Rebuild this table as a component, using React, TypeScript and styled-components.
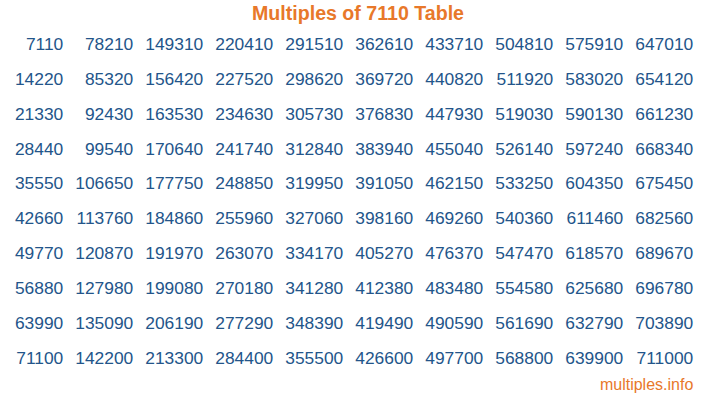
import React from 'react';
import styled, { createGlobalStyle } from 'styled-components';

const colors = {
  orange: '#e8782a',
  blue: '#23558a',
  white: '#ffffff',
};

const GlobalStyle = createGlobalStyle`
  html, body {
    margin: 0;
    padding: 0;
    background: ${colors.white};
  }
  body {
    font-family: "Liberation Sans", Arial, sans-serif;
  }
`;

const Page = styled.div`
  width: 716px;
  height: 400px;
  display: flex;
  flex-direction: column;
  overflow: hidden;
`;

const Title = styled.h1`
  margin: 0;
  height: 27px;
  line-height: 27px;
  font-size: 19.6px;
  font-weight: 700;
  text-align: center;
  color: ${colors.orange};
`;

const Grid = styled.div`
  display: grid;
  grid-template-columns: 63.3px repeat(9, 70px);
  grid-template-rows: repeat(10, 34.87px);
  grid-auto-flow: column;
`;

const Cell = styled.div`
  font-size: 17.4px;
  line-height: 34.87px;
  text-align: right;
  color: ${colors.blue};
  white-space: nowrap;
`;

const Footer = styled.div`
  margin-top: 1px;
  padding-right: 22.7px;
  font-size: 16px;
  line-height: 16px;
  text-align: right;
  color: ${colors.orange};
`;

const BASE = 7110;

const App: React.FC = () => {
  const values = Array.from({ length: 100 }, (_, i) => BASE * (i + 1));

  return (
    <Page>
      <GlobalStyle />
      <Title>Multiples of 7110 Table</Title>
      <Grid>
        {values.map((v) => (
          <Cell key={v}>{v}</Cell>
        ))}
      </Grid>
      <Footer>multiples.info</Footer>
    </Page>
  );
};

export default App;
